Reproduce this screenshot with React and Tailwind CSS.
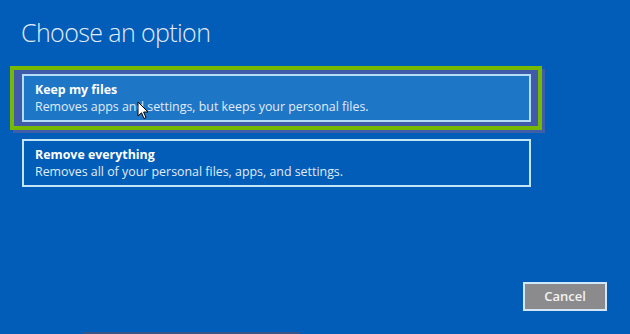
export default function App() {
  return (
    <div className="relative flex h-[334px] w-[630px] flex-col overflow-hidden bg-[#015db8] font-['Open_Sans',sans-serif]">
      <h1 className="ml-[21px] mt-[15px] text-[25px] font-light leading-[34px] tracking-[-0.6px] text-[#e3ecf7]">
        Choose an option
      </h1>
      <div className="ml-[10px] mt-[17px] w-[532px] border-[4px] border-[#76b900] bg-[#3f5ba9] pb-[4px] pl-[8px] pr-[7px] pt-[4px] shadow-[3px_3px_0_#3e5eaa]">
        <div className="flex h-[48px] flex-col justify-center border-[2px] border-[#b4def8] bg-[#1e76c7] pl-[11px]">
          <div className="text-[12.4px] font-bold leading-[17px] text-white">Keep my files</div>
          <div className="text-[12.4px] leading-[17px] text-[#e0ecf7]">
            Removes apps and settings, but keeps your personal files.
          </div>
        </div>
      </div>
      <div className="ml-[22px] mt-[9px] flex h-[48px] w-[509px] flex-col justify-center border-[2px] border-[#c4e4f8] pl-[11px]">
        <div className="text-[12.4px] font-bold leading-[17px] text-white">Remove everything</div>
        <div className="text-[12.4px] leading-[17px] text-[#e0ecf7]">
          Removes all of your personal files, apps, and settings.
        </div>
      </div>
      <div className="flex-1" />
      <div className="mb-[21px] flex justify-end pr-[23px]">
        <button className="flex h-[29px] w-[84px] items-center justify-center border-[2px] border-[#d2e8f8] bg-[#8b8b8d] text-[13px] font-semibold text-[#f2f2f2]">
          Cancel
        </button>
      </div>
      <div className="ml-[83px] h-[2px] w-[217px] bg-[#3a5488]" />
      <svg
        className="absolute left-[137px] top-[101px]"
        width="12"
        height="19"
        viewBox="0 0 12 19"
      >
        <path
          d="M1 1 L1 15 L4.5 11.8 L7 17.5 L9 16.6 L6.6 11 L11 11 Z"
          fill="#ffffff"
          stroke="#000000"
          strokeWidth="1"
          strokeLinejoin="round"
        />
      </svg>
    </div>
  );
}
